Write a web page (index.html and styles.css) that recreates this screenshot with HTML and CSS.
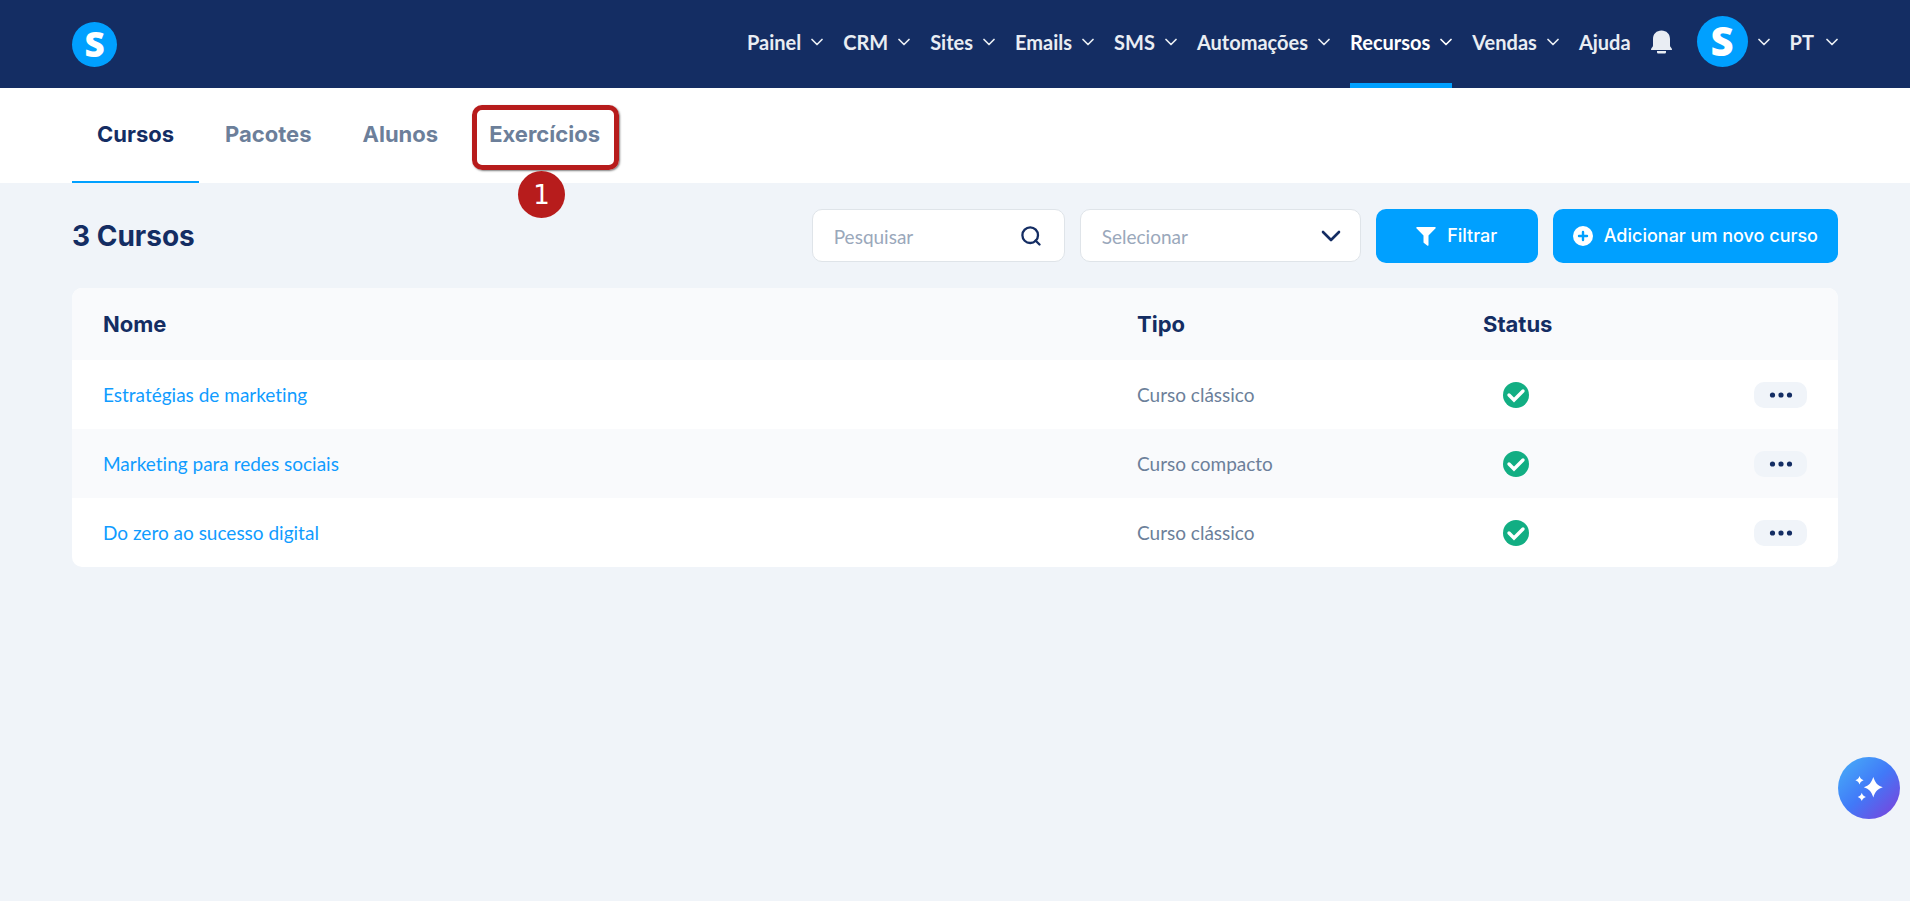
FILE: index.html
```html
<!DOCTYPE html>
<html lang="pt">

<head>
    <meta charset="UTF-8">
    <meta name="viewport" content="width=device-width, initial-scale=1.0">
    <title>Cursos</title>
    <link rel="stylesheet" href="styles.css">
</head>

<body>

    <!-- Ícones reutilizados na página -->
    <svg class="sprite" aria-hidden="true">
        <symbol id="chevron" viewBox="0 0 12 8">
            <path d="M1 1.500L6 6.500L11 1.500" fill="none" stroke="currentColor" stroke-width="1.700" stroke-linecap="round" stroke-linejoin="round" />
        </symbol>
        <symbol id="check" viewBox="0 0 26 26">
            <circle cx="13" cy="13" r="13" fill="#12ae83" />
            <path d="M6 13L11 18L20 9" fill="none" stroke="#fff" stroke-width="3.400" stroke-linecap="round" stroke-linejoin="miter" />
        </symbol>
        <symbol id="dots" viewBox="0 0 24 6">
            <circle cx="3.500" cy="3" r="2.600" fill="#142d63" />
            <circle cx="12" cy="3" r="2.600" fill="#142d63" />
            <circle cx="20.500" cy="3" r="2.600" fill="#142d63" />
        </symbol>
    </svg>

    <header class="header">
        <a href="#" class="logo" aria-label="Início">S</a>
        <nav class="nav">
            <a href="#" class="nav-link">Painel <svg class="chevron"><use href="#chevron" /></svg></a>
            <a href="#" class="nav-link">CRM <svg class="chevron"><use href="#chevron" /></svg></a>
            <a href="#" class="nav-link">Sites <svg class="chevron"><use href="#chevron" /></svg></a>
            <a href="#" class="nav-link">Emails <svg class="chevron"><use href="#chevron" /></svg></a>
            <a href="#" class="nav-link">SMS <svg class="chevron"><use href="#chevron" /></svg></a>
            <a href="#" class="nav-link">Automações <svg class="chevron"><use href="#chevron" /></svg></a>
            <a href="#" class="nav-link active">Recursos <svg class="chevron"><use href="#chevron" /></svg></a>
            <a href="#" class="nav-link">Vendas <svg class="chevron"><use href="#chevron" /></svg></a>
            <a href="#" class="nav-link">Ajuda</a>
            <button class="nav-link" aria-label="Notificações">
                <svg class="bell" viewBox="0 0 21 24" fill="currentColor">
                    <path d="M10.500 0.500C5.500 0.500 2 4 2 9v6.500c0 1.800-2 2.300-2 4.200V20h21v-.3c0-1.900-2-2.400-2-4.200V9c0-5-3.500-8.500-8.500-8.500z" />
                    <path d="M6 21h9v1.300a1.200 1.200 0 0 1-1.200 1.200H7.200A1.200 1.200 0 0 1 6 22.300z" />
                </svg>
            </button>
            <button class="nav-link account" aria-label="Conta"><span class="avatar">S</span> <svg class="chevron"><use href="#chevron" /></svg></button>
            <button class="nav-link language">PT <svg class="chevron"><use href="#chevron" /></svg></button>
        </nav>
    </header>

    <nav class="tabs">
        <a href="#" class="tab active">Cursos</a>
        <a href="#" class="tab">Pacotes</a>
        <a href="#" class="tab">Alunos</a>
        <a href="#" class="tab marked">Exercícios<span class="marker">1</span></a>
    </nav>

    <main class="content">
        <div class="toolbar">
            <h1>3 Cursos</h1>
            <form class="filters">
                <label class="field search">
                    <input type="text" placeholder="Pesquisar" aria-label="Pesquisar">
                    <svg class="field-icon" viewBox="0 0 20 20" fill="none" stroke="currentColor" stroke-width="2.300" stroke-linecap="round">
                        <circle cx="9.200" cy="9.200" r="7.800" />
                        <path d="M14.500 14.500L18.500 18.500" />
                    </svg>
                </label>
                <label class="field type">
                    <select aria-label="Selecionar">
                        <option>Selecionar</option>
                    </select>
                    <svg class="field-icon" viewBox="0 0 20 20" fill="none" stroke="currentColor" stroke-width="2.600" stroke-linecap="round" stroke-linejoin="round">
                        <path d="M2 6L10 14L18 6" />
                    </svg>
                </label>
                <button type="button" class="btn btn-filter">
                    <svg class="btn-icon" viewBox="0 0 20 20" fill="currentColor">
                        <path d="M1 1h18a.8.8 0 0 1 .6 1.300L12.500 9.500V19a.8.8 0 0 1-1.300.6L8 17a1 1 0 0 1-.5-.8V9.500L.4 2.300A.8.8 0 0 1 1 1z" />
                    </svg>
                    Filtrar
                </button>
                <button type="button" class="btn">
                    <svg class="btn-icon" viewBox="0 0 20 20">
                        <circle cx="10" cy="10" r="10" fill="#fff" />
                        <path d="M10 6v8M6 10h8" stroke="#00a0ff" stroke-width="2.400" stroke-linecap="round" />
                    </svg>
                    Adicionar um novo curso
                </button>
            </form>
        </div>

        <table class="courses">
            <thead>
                <tr>
                    <th class="col-name">Nome</th>
                    <th class="col-type">Tipo</th>
                    <th class="col-status">Status</th>
                    <th class="col-actions"></th>
                </tr>
            </thead>
            <tbody>
                <tr>
                    <td><a href="#">Estratégias de marketing</a></td>
                    <td>Curso clássico</td>
                    <td><svg class="check"><use href="#check" /></svg></td>
                    <td><button class="more" aria-label="Mais ações"><svg class="dots"><use href="#dots" /></svg></button></td>
                </tr>
                <tr>
                    <td><a href="#">Marketing para redes sociais</a></td>
                    <td>Curso compacto</td>
                    <td><svg class="check"><use href="#check" /></svg></td>
                    <td><button class="more" aria-label="Mais ações"><svg class="dots"><use href="#dots" /></svg></button></td>
                </tr>
                <tr>
                    <td><a href="#">Do zero ao sucesso digital</a></td>
                    <td>Curso clássico</td>
                    <td><svg class="check"><use href="#check" /></svg></td>
                    <td><button class="more" aria-label="Mais ações"><svg class="dots"><use href="#dots" /></svg></button></td>
                </tr>
            </tbody>
        </table>
    </main>

    <button class="assistant" aria-label="Assistente">
        <svg viewBox="0 0 28 22" fill="#fff">
            <path d="M18.300 0C20.300 6 22.300 8.300 27.800 10.200C22.300 12.200 20.300 14.400 18.300 20.400C16.300 14.400 14.300 12.200 8.800 10.200C14.300 8.300 16.300 6 18.300 0z" />
            <path d="M4.500-1C5.500 1.600 6.200 2.300 8.600 3.200C6.200 4.100 5.500 4.800 4.500 7.400C3.500 4.800 2.800 4.100.4 3.200C2.800 2.300 3.500 1.600 4.500-1z" />
            <path d="M6.800 15.700C7.800 18.300 8.500 19 10.900 19.900C8.500 20.800 7.800 21.500 6.800 24.100C5.800 21.500 5.100 20.800 2.700 19.900C5.100 19 5.800 18.300 6.800 15.700z" />
        </svg>
    </button>

</body>

</html>
```
FILE: styles.css
```css
*,
*::before {
    box-sizing: border-box;
}

body {
    margin: 0;
    min-height: 100vh;
    background-color: #f0f4f9;
    color: #142d63;
    font-family: Lato, sans-serif;
    font-size: 19px;
    font-variant-ligatures: none;
}

a {
    text-decoration: none;
}

button {
    border: none;
    background: none;
    padding: 0;
    font: inherit;
    cursor: pointer;
}

.sprite {
    display: none;
}

/* Cabeçalho */
.header {
    display: flex;
    justify-content: space-between;
    align-items: center;
    height: 88px;
    padding: 0 72px;
    background-color: #142d63;
}

.logo,
.avatar {
    display: flex;
    align-items: center;
    justify-content: center;
    padding-bottom: 2px;
    border-radius: 50%;
    background-color: #00a0ff;
    color: #fff;
    font-family: "Open Sans", sans-serif;
    font-weight: 800;
}

.logo {
    width: 45px;
    height: 45px;
    font-size: 35px;
}

.avatar {
    width: 51px;
    height: 51px;
    font-size: 40px;
}

.nav {
    display: flex;
    align-self: stretch;
    gap: 20px;
}

.nav-link {
    display: flex;
    align-items: center;
    gap: 10px;
    border-bottom: 5px solid transparent;
    color: #e9edf3;
    font-size: 20px;
    font-weight: 700;
}

.nav-link.active {
    border-bottom-color: #00a0ff;
    color: #fff;
}

.nav-link.account {
    margin-left: 5px;
}

.nav-link.language {
    gap: 12px;
}

.chevron {
    width: 12px;
    height: 8px;
}

.bell {
    width: 21px;
    height: 24px;
}

/* Abas */
.tabs {
    display: flex;
    gap: 1px;
    height: 95px;
    padding: 0 72px;
    background-color: #fff;
    font-family: Inter, sans-serif;
    font-size: 22px;
    font-weight: 700;
    line-height: 26px;
}

.tab {
    padding: 33px 25px 0;
    border-bottom: 2px solid transparent;
    color: #6c7f9a;
}

.tab.active {
    border-bottom-color: #00a0ff;
    color: #142d63;
}

.tab.marked {
    position: relative;
}

.tab.marked::before {
    content: "";
    position: absolute;
    top: 17px;
    left: 8px;
    right: 6px;
    height: 65px;
    border: 5px solid #b71c1c;
    border-radius: 10px;
    box-shadow: 1px 1px 2px rgba(0, 0, 0, 0.5);
}

.marker {
    position: absolute;
    top: 83px;
    left: 54px;
    width: 47px;
    height: 47px;
    border-radius: 50%;
    background-color: #b71c1c;
    color: #fff;
    font-family: "DejaVu Sans", sans-serif;
    font-size: 26px;
    font-weight: 400;
    line-height: 48px;
    text-align: center;
}

/* Conteúdo */
.content {
    padding: 26px 72px;
}

.toolbar {
    display: flex;
    justify-content: space-between;
    align-items: center;
    margin-bottom: 25px;
}

h1 {
    margin: 0;
    font-family: Inter, sans-serif;
    font-size: 28px;
    font-weight: 700;
}

.filters {
    display: flex;
    gap: 15px;
}

.field {
    position: relative;
    display: block;
    height: 53px;
}

.field.search {
    width: 253px;
}

.field.type {
    width: 281px;
}

.field input,
.field select {
    width: 100%;
    height: 100%;
    padding: 2px 60px 0 21px;
    border: 1px solid #dfe4e9;
    border-radius: 10px;
    background-color: #fff;
    color: #9aa8bb;
    font: inherit;
    appearance: none;
}

.field input::placeholder {
    color: #9aa8bb;
}

.field-icon {
    position: absolute;
    top: 17px;
    right: 24px;
    width: 20px;
    height: 20px;
    pointer-events: none;
}

.field.type .field-icon {
    right: 20px;
}

.btn {
    display: flex;
    align-items: center;
    justify-content: center;
    gap: 11px;
    height: 54px;
    padding: 0 20px 1px;
    border-radius: 10px;
    background-color: #00a0ff;
    color: #fff;
    font-family: Inter, sans-serif;
    font-size: 18px;
    font-weight: 500;
}

.btn-filter {
    width: 162px;
}

.btn-icon {
    width: 20px;
    height: 20px;
}

/* Tabela de cursos */
.courses {
    width: 100%;
    border-collapse: collapse;
    table-layout: fixed;
    border-radius: 10px;
    overflow: hidden;
    background-color: #fff;
}

th,
td {
    padding: 0 31px;
    text-align: left;
}

th {
    height: 72px;
    background-color: #f9fafc;
    font-family: Inter, sans-serif;
    font-size: 22px;
    font-weight: 700;
}

td {
    height: 69px;
    color: #6c7f9a;
}

td a {
    color: #109cff;
}

tbody tr:nth-child(even) {
    background-color: #f9fafc;
}

.col-type {
    width: 346px;
}

.col-status {
    width: 220px;
}

.col-actions {
    width: 166px;
}

.check {
    display: block;
    width: 26px;
    height: 26px;
    margin-left: 20px;
}

.more {
    display: flex;
    align-items: center;
    justify-content: center;
    width: 53px;
    height: 26px;
    margin-left: auto;
    border-radius: 10px;
    background-color: #f0f4f9;
}

.dots {
    width: 24px;
    height: 6px;
}

/* Botão flutuante */
.assistant {
    position: fixed;
    right: 10px;
    bottom: 82px;
    display: flex;
    align-items: center;
    justify-content: center;
    width: 62px;
    height: 62px;
    border-radius: 50%;
    background: linear-gradient(135deg, #46a6f8 10%, #4179f8 50%, #7a43dc 95%);
}

.assistant svg {
    width: 28px;
    height: 22px;
    overflow: visible;
}
```
